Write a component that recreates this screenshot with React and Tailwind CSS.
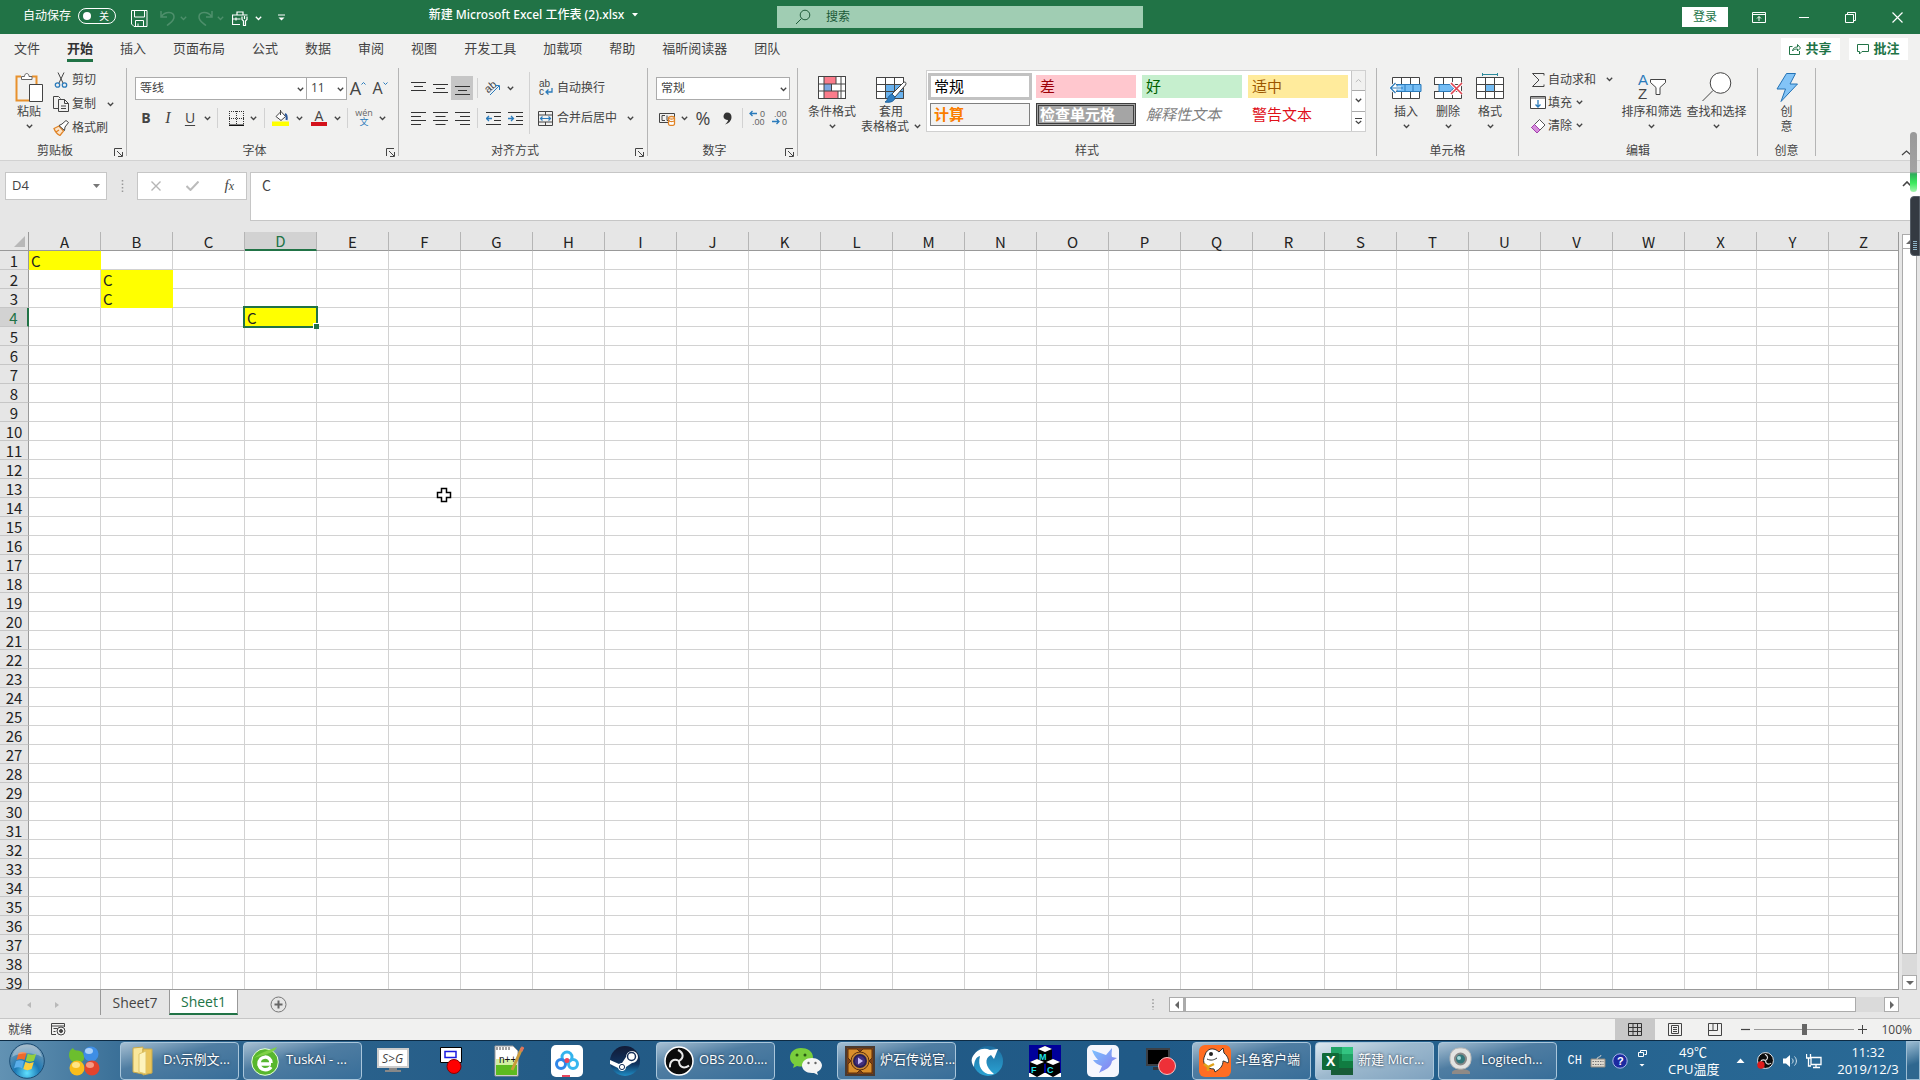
import React, { useState } from 'react';

const COLUMNS = 'ABCDEFGHIJKLMNOPQRSTUVWXYZ'.split('');
const ROWS = Array.from({ length: 39 }, (_, i) => i + 1);
const CELLS = { A1: 'C', B2: 'C', B3: 'C', D4: 'C' };
const TABS = ['文件', '开始', '插入', '页面布局', '公式', '数据', '审阅', '视图', '开发工具', '加载项', '帮助', '福昕阅读器', '团队'];

const Svg = ({ w = 16, h = 16, children, className = '' }) => (
    <svg width={w} height={h} viewBox={`0 0 ${w} ${h}`} fill="none" stroke="#444" className={`shrink-0 ${className}`} aria-hidden="true">
        {children}
    </svg>
);

const Chevron = ({ className = '', color = '#444' }) => (
    <Svg w={7} h={5} className={className}>
        <path d="M0.8 0.8 3.5 3.5 6.2 0.8" stroke={color} strokeWidth="1.3" />
    </Svg>
);

/* ---------- title bar ---------- */

const TitleBar = () => {
    const [autoSave, setAutoSave] = useState(false);
    return (
        <header className="flex h-[34px] shrink-0 items-center bg-[#217346] text-xs text-white">
            <div className="flex min-w-0 flex-1 items-center pb-1">
                <div className="flex w-[290px] shrink-0 items-center pl-[23px] pt-0.5">
                    <label htmlFor="autosave" className="w-[55px] shrink-0">自动保存</label>
                    <span className="relative flex h-4 w-[38px] shrink-0 items-center rounded-full border border-white">
                        <input
                            id="autosave"
                            type="checkbox"
                            role="switch"
                            checked={autoSave}
                            onChange={(e) => setAutoSave(e.target.checked)}
                            className="absolute inset-0 m-0 appearance-none"
                        />
                        <span className="ml-1 size-2 rounded-full bg-white" />
                        <span className="ml-2 text-[10px] leading-none">关</span>
                    </span>
                    <button aria-label="保存" className="ml-[15px] pt-1">
                        <Svg w={17} h={17}>
                            <path d="M0.5 0.5h15.5v16H3l-2.500-2.500zM3.500 0.500v6.500h10v-6.500M4.500 16.500v-6h8v6M7 13.500v3" stroke="#fff" />
                        </Svg>
                    </button>
                    <button aria-label="撤消" className="ml-3 flex items-center gap-1 pt-1 opacity-20">
                        <Svg w={16} h={16}><path d="M1 1v6h6M1.500 6.500C5 1 14 1 14 7c0 4-3 5-7 8.500" stroke="#fff" strokeWidth="1.500" /></Svg>
                        <Chevron color="#fff" />
                    </button>
                    <button aria-label="恢复" className="ml-2.5 flex items-center gap-1 pt-1 opacity-20">
                        <Svg w={16} h={16}><path d="M15 1v6H9M14.500 6.500C11 1 2 1 2 7c0 4 3 5 7 8.500" stroke="#fff" strokeWidth="1.500" /></Svg>
                        <Chevron color="#fff" />
                    </button>
                    <button aria-label="工具" className="ml-2 flex items-center gap-1.5 pt-1">
                        <Svg w={17} h={15}>
                            <path d="M5 4V1h6v3M8 13.500H0.500V4h15M0.500 8h8M4 6.500v3" stroke="#fff" strokeWidth="1.200" />
                            <path d="M10 5.500v3l1.500 1.500v4.500h2V10L15 8.500v-3M12.500 5v3" stroke="#fff" strokeWidth="1.200" />
                        </Svg>
                        <Chevron color="#fff" />
                    </button>
                    <button aria-label="自定义快速访问工具栏" className="ml-[15px] pt-1">
                        <Svg w={9} h={8}><path d="M1 1h7" stroke="#fff" /><path d="M1.500 3.500h6l-3 3z" fill="#fff" stroke="none" /></Svg>
                    </button>
                </div>
                <h1 className="flex min-w-0 flex-1 items-center justify-center gap-2 font-['Noto_Sans','Noto_Sans_CJK_SC',sans-serif] font-medium">
                    新建 Microsoft Excel 工作表 (2).xlsx
                    <Svg w={6} h={4}><path d="M0 0h6L3 3.500z" fill="#fff" stroke="none" /></Svg>
                </h1>
            </div>
            <label className="flex h-[22px] w-[366px] shrink-0 items-center bg-[#a0cdb3] pl-[18px]">
                <Svg w={16} h={16}><circle cx="10" cy="6" r="4.800" stroke="#1f5b39" /><path d="M6.500 9.500 1 15" stroke="#1f5b39" /></Svg>
                <input type="search" aria-label="搜索" placeholder="搜索" className="ml-[15px] min-w-0 flex-1 bg-transparent outline-none placeholder:text-[#1c5a38]" />
            </label>
            <div className="flex min-w-0 flex-1 items-center justify-end">
                <button className="mr-6 h-5 w-[46px] bg-white text-[#217346]">登录</button>
                <button aria-label="功能区显示选项" className="mr-[33px]">
                    <Svg w={14} h={11}><path d="M0.500 0.500h13v10h-13zM0.500 2.500h13M7 9V4.500M5 6.500l2-2 2 2" stroke="#fff" /></Svg>
                </button>
                <button aria-label="最小化" className="mr-9"><Svg w={10} h={11}><path d="M0 5.500h10" stroke="#fff" /></Svg></button>
                <button aria-label="还原" className="mr-9"><Svg w={11} h={11}><path d="M0.500 2.500h8v8h-8zM2.500 2.500v-2h8v8h-2" stroke="#fff" /></Svg></button>
                <button aria-label="关闭" className="mr-[17px]"><Svg w={11} h={11}><path d="m0.500 0.500 10 10M10.500 0.500l-10 10" stroke="#fff" strokeWidth="1.200" /></Svg></button>
            </div>
        </header>
    );
};

const MenuTabs = () => (
    <nav className="flex h-8 shrink-0 items-start bg-[#f1f1f0] pl-3.5 pr-3 text-[13px] text-[#444]">
        <div className="flex flex-1 gap-[27px] pt-1">
            {TABS.map((tab) => (
                <button
                    key={tab}
                    className={tab === '开始' ? 'flex h-6 items-start border-b-[3px] border-[#217346] leading-5 font-bold text-[#333]' : 'flex h-6 items-start border-b-[3px] border-transparent leading-5'}
                >
                    {tab}
                </button>
            ))}
        </div>
        <div className="flex gap-[9px] pt-1 font-bold text-[#217346]">
            <button className="flex h-[22px] w-[59px] items-center justify-center gap-1 bg-white">
                <Svg w={12} h={12}><path d="M3.500 3.500h-3v8h10V8M3.500 8C4 5 6 4 8.500 4V1.500L11.500 5l-3 3V6C6 6 4.500 6.500 3.500 8z" stroke="#217346" /></Svg>
                共享
            </button>
            <button className="flex h-[22px] w-[59px] items-center justify-center gap-1 bg-white">
                <Svg w={12} h={12}><path d="M0.500 1.500h11v7H5L2.500 11V8.500h-2z" stroke="#217346" /></Svg>
                批注
            </button>
        </div>
    </nav>
);

/* ---------- ribbon ---------- */

const Group = ({ label, width, launcher, children }) => (
    <section className={`flex shrink-0 pt-0.5 ${width}`}>
        <div className="flex min-w-0 flex-1 flex-col">
            <div className="h-[75px]">{children}</div>
            <div className="flex h-[18px] items-center">
                <span className="flex-1 text-center leading-[18px]">{label}</span>
                {launcher && (
                    <button aria-label={`${label}设置`} className="mr-[3px] ml-1 w-[9px] pt-0.5">
                        <Svg w={9} h={9}><path d="M0.500 8V0.500H8M3 3l5 5M8.500 4v4.500H4" /></Svg>
                    </button>
                )}
            </div>
        </div>
        <div className="mb-1 w-px bg-[#b5b5b5]" />
    </section>
);

const Tool = ({ label, children, active, className = 'w-[22px]' }) => (
    <button aria-label={label} className={`flex h-6 shrink-0 items-center justify-center ${className} ${active ? 'bg-[#c6c6c6]' : ''}`}>
        {children}
    </button>
);

const Big = ({ icon, lines, width, chevron = true }) => (
    <button className={`flex shrink-0 flex-col items-center ${width}`}>
        <span className="flex h-[34px] items-center justify-center">{icon}</span>
        {lines.map((line, i) => (
            <span key={line} className="flex items-center gap-[5px] leading-[15px] whitespace-nowrap">
                {line}
                {chevron && lines.length > 1 && i === lines.length - 1 && <Chevron />}
            </span>
        ))}
        {chevron && lines.length === 1 && <Chevron className="mt-[5px]" />}
    </button>
);

const DropBox = ({ label, value, className }) => (
    <span className={`relative block h-[23px] ${className}`}>
        <select aria-label={label} defaultValue={value} className="size-full appearance-none border border-[#ababab] bg-white pl-1 text-xs leading-none text-[#444] outline-none">
            <option>{value}</option>
        </select>
        <Chevron className="pointer-events-none absolute top-2.5 right-[3px]" />
    </span>
);

const Divider = () => <span className="mx-1 h-5 w-px shrink-0 bg-[#d2d2d2]" />;

const Lines = ({ d }) => <Svg w={15} h={15}><path d={d} stroke="#333" /></Svg>;

const ClipboardGroup = () => (
    <Group label="剪贴板" width="w-[127px]" launcher>
        <div className="flex">
            <Big
                width="ml-[5px] w-12 pt-0.5"
                lines={['粘贴']}
                icon={(
                    <Svg w={28} h={31}>
                        <path d="M6 4.500H1.500v24H14M17 4.500h4.500V12" stroke="#e8912d" strokeWidth="2" />
                        <path d="M6.500 7.500v-3h3c0-4 4.500-4 4.500 0h3v3z" stroke="#666" fill="#fff" />
                        <path d="M14.500 12.500h13v17h-13z" fill="#fff" />
                    </Svg>
                )}
            />
            <div className="flex flex-col">
                <button className="flex h-6 items-center gap-[3px]">
                    <Svg>
                        <path d="M5 0.500 10 11M11 0.500 6 11" />
                        <circle cx="4.500" cy="13" r="2.200" stroke="#2b7bbb" strokeWidth="1.300" /><circle cx="11.500" cy="13" r="2.200" stroke="#2b7bbb" strokeWidth="1.300" />
                    </Svg>
                    剪切
                </button>
                <button className="flex h-6 items-center gap-[3px]">
                    <Svg>
                        <path d="M5 12.500H0.500V0.500h5l2 2M5.500 3.500h6l4 4v8h-10zM11.500 3.500v4h4M8 10h5M8 12.500h5" />
                    </Svg>
                    <span className="mr-2">复制</span>
                    <Chevron />
                </button>
                <button className="flex h-6 items-center gap-[3px]">
                    <Svg>
                        <path d="M1 8.500 6 6l4.500 5L7 15.500C4 14 2 11.500 1 8.500zM3 12l3-2" stroke="#e08427" strokeWidth="1.300" fill="#fbe3c8" />
                        <path d="m6 5.500 3-1.500L13 0.500l2.500 2L12 7l-0.500 3.500z" fill="#fff" />
                    </Svg>
                    格式刷
                </button>
            </div>
        </div>
    </Group>
);

const FontGroup = () => (
    <Group label="字体" width="w-[272px]" launcher>
        <div className="flex h-10 items-center pl-2">
            <DropBox label="字体" value="等线" className="w-[172px]" />
            <DropBox label="字号" value="11" className="-ml-px w-[41px]" />
            <Tool label="增大字号">
                <span className="text-lg leading-none">A</span><Svg w={5} h={14}><path d="m0.500 3.500 2-2 2 2" stroke="#2b7bbb" /></Svg>
            </Tool>
            <Tool label="减小字号">
                <span className="text-base leading-none">A</span><Svg w={5} h={14}><path d="m0.500 1.500 2 2 2-2" stroke="#2b7bbb" /></Svg>
            </Tool>
        </div>
        <div className="flex h-5 items-center pl-2">
            <Tool label="加粗"><b className="text-sm">B</b></Tool>
            <Tool label="倾斜"><i className="font-['Liberation_Serif',serif] text-base">I</i></Tool>
            <Tool label="下划线"><u className="text-sm underline-offset-2">U</u></Tool>
            <Tool label="下划线样式" className="w-3"><Chevron /></Tool>
            <Divider />
            <Tool label="边框" className="ml-1 w-5">
                <Svg w={15} h={15}><path d="M0.500 0v14M7.500 0v14M14.500 0v14M0 0.500h15M0 7.500h15" strokeDasharray="1 1" stroke="#333" /><path d="M0 14.500h15" stroke="#111" strokeWidth="2" /></Svg>
            </Tool>
            <Tool label="边框样式" className="w-3.5"><Chevron /></Tool>
            <Divider />
            <Tool label="填充颜色" className="w-[22px]">
                <Svg w={17} h={16}>
                    <path d="M0 11.500h17V16H0z" fill="#ff0" stroke="none" />
                    <path d="m4 6.500 5-5 4.500 5-4.500 4zM8.500 0v5" fill="#fff" /><path d="M13 4c2 1 2 3 1.500 6" stroke="#2b579a" strokeWidth="2" />
                </Svg>
            </Tool>
            <Tool label="填充颜色选项" className="w-4"><Chevron /></Tool>
            <Tool label="字体颜色" className="w-6">
                <span className="flex h-4 w-4 items-end justify-center border-b-4 border-[#d4111b] text-sm leading-[13px]">A</span>
            </Tool>
            <Tool label="字体颜色选项" className="w-3"><Chevron /></Tool>
            <Divider />
            <Tool label="拼音" className="w-6 flex-col">
                <span className="text-[9px] leading-[8px] text-[#666]">wén</span>
                <span className="text-[9px] leading-[10px] text-[#2b7bbb]">文</span>
            </Tool>
            <Tool label="拼音选项" className="w-3"><Chevron /></Tool>
        </div>
    </Group>
);

const AlignGroup = () => (
    <Group label="对齐方式" width="w-[249px]" launcher>
        <div className="flex pl-2">
            <div>
                <div className="flex h-10 items-center">
                    <Tool label="顶端对齐"><Lines d="M0 1.500h15M3 5.500h9M0 9.500h15" /></Tool>
                    <Tool label="垂直居中"><Lines d="M0 3.500h15M3 7.500h9M0 11.500h15" /></Tool>
                    <Tool label="底端对齐" active><Lines d="M0 5.500h15M3 9.500h9M0 13.500h15" /></Tool>
                    <Divider />
                    <Tool label="方向" className="w-[22px]">
                        <Svg w={20} h={18}>
                            <text x="2" y="12" fontSize="11" fill="#444" stroke="none" transform="rotate(-40 7 9)" className="font-['Liberation_Sans',sans-serif]">ab</text>
                            <path d="M7 16 16 7M12 6.500h4.500V11" stroke="#2b7bbb" />
                        </Svg>
                    </Tool>
                    <Tool label="方向选项" className="w-3"><Chevron /></Tool>
                </div>
                <div className="flex h-5 items-center">
                    <Tool label="左对齐"><Lines d="M0 1.500h15M0 5.500h10M0 9.500h15M0 13.500h10" /></Tool>
                    <Tool label="居中"><Lines d="M0 1.500h15M2.500 5.500h10M0 9.500h15M2.500 13.500h10" /></Tool>
                    <Tool label="右对齐"><Lines d="M0 1.500h15M5 5.500h10M0 9.500h15M5 13.500h10" /></Tool>
                    <Divider />
                    <Tool label="减少缩进量"><Svg w={15} h={15}><path d="M0 1.500h15M8 5.500h7M8 9.500h7M0 13.500h15" stroke="#333" /><path d="M0.500 7.500H6M3 5 0.500 7.500 3 10" stroke="#2b7bbb" strokeWidth="1.300" /></Svg></Tool>
                    <Tool label="增加缩进量"><Svg w={15} h={15}><path d="M0 1.500h15M8 5.500h7M8 9.500h7M0 13.500h15" stroke="#333" /><path d="M0 7.500h5.500M3 5l2.500 2.500L3 10" stroke="#2b7bbb" strokeWidth="1.300" /></Svg></Tool>
                </div>
            </div>
            <span className="mt-1 mr-2 ml-[3px] h-[62px] w-px bg-[#d2d2d2]" />
            <div>
                <button className="flex h-10 items-center gap-1">
                    <Svg w={15} h={18}>
                        <text x="1" y="8" fontSize="10" fill="#444" stroke="none" className="font-['Liberation_Sans',sans-serif]">ab</text>
                        <text x="1" y="16" fontSize="10" fill="#444" stroke="none" className="font-['Liberation_Sans',sans-serif]">c</text>
                        <path d="M14 9v4H8M10.500 10.500 8 13l2.500 2.500" stroke="#2b7bbb" strokeWidth="1.300" />
                    </Svg>
                    自动换行
                </button>
                <button className="flex h-5 items-center gap-1">
                    <Svg w={15} h={15}>
                        <path d="M0.500 0.500h14v14h-14zM0.500 4h14M0.500 11h14M7.500 0.500V4M7.500 11v3.500" /><path d="M2.500 7.500h10M4.500 5.500l-2 2 2 2M10.500 5.500l2 2-2 2" stroke="#2b7bbb" strokeWidth="1.200" />
                    </Svg>
                    <span className="mr-1.5">合并后居中</span>
                    <Chevron />
                </button>
            </div>
        </div>
    </Group>
);

const NumberGroup = () => (
    <Group label="数字" width="w-[150px]" launcher>
        <div className="flex h-10 items-center pl-2">
            <DropBox label="数字格式" value="常规" className="w-[134px]" />
        </div>
        <div className="flex h-5 items-center pl-2">
            <Tool label="会计数字格式">
                <Svg w={17} h={15}>
                    <path d="M0.500 2.500h15v9h-15zM6 4.500H3v5h3M8 4.500v5h3" /><path d="M9.500 7c0-2 6-2 6 0v6c0 2-6 2-6 0zM9.500 9.500c1 1.500 5 1.500 6 0M9.500 7c1 1.500 5 1.500 6 0" fill="#fff" stroke="#e08427" strokeWidth="1.300" />
                </Svg>
            </Tool>
            <Tool label="会计数字格式选项" className="w-3"><Chevron /></Tool>
            <Tool label="百分比样式" className="w-[26px]"><span className="text-lg leading-none">%</span></Tool>
            <Tool label="千位分隔样式" className="w-[22px]">
                <Svg w={9} h={13}><path d="M4 0.500c3 0 4.500 2 4.500 4.500C8.500 9 5.500 11.500 2 12.500c2-2 3-3 3-4.500C2.500 8 0.500 6.500 0.500 4.500S2 0.500 4 0.500z" fill="#333" stroke="none" /></Svg>
            </Tool>
            <Divider />
            <Tool label="增加小数位数">
                <Svg w={18} h={18}>
                    <text x="11" y="8" fontSize="9" fill="#666" stroke="none" className="font-['Liberation_Sans',sans-serif]">0</text>
                    <text x="3" y="16" fontSize="9" fill="#666" stroke="none" className="font-['Liberation_Sans',sans-serif]">.00</text>
                    <path d="M1 4.500h7M3.500 2 1 4.500 3.500 7" stroke="#2b7bbb" strokeWidth="1.300" />
                </Svg>
            </Tool>
            <Tool label="减少小数位数">
                <Svg w={18} h={18}>
                    <text x="3" y="8" fontSize="9" fill="#666" stroke="none" className="font-['Liberation_Sans',sans-serif]">.00</text>
                    <text x="11" y="16" fontSize="9" fill="#666" stroke="none" className="font-['Liberation_Sans',sans-serif]">0</text>
                    <path d="M1 12.500h7M5.500 10 8 12.500 5.500 15" stroke="#2b7bbb" strokeWidth="1.300" />
                </Svg>
            </Tool>
        </div>
    </Group>
);

const STYLES = [
    ['常规', 'bg-white px-1 text-black outline-3 outline-[#c2c2c2] -outline-offset-1'],
    ['差', 'bg-[#ffc7ce] px-1 text-[#9c0006]'],
    ['好', 'bg-[#c6efce] px-1 text-[#006100]'],
    ['适中', 'bg-[#ffeb9c] px-1 text-[#9c5700]'],
    ['计算', 'border border-[#7f7f7f] bg-[#f2f2f2] px-[3px] font-bold text-[#fa7d00]'],
    ['检查单元格', 'border-3 border-double border-[#3f3f3f] bg-[#a5a5a5] px-px font-bold text-white'],
    ['解释性文本', 'px-1 text-[#7f7f7f] italic'],
    ['警告文本', 'px-1 text-[#e0101a]'],
];

const StylesGroup = () => (
    <Group label="样式" width="w-[579px]">
        <div className="flex">
            <Big
                width="ml-[5px] w-[58px] pt-0.5"
                lines={['条件格式']}
                icon={(
                    <Svg w={28} h={23}>
                        <path d="M0.500 0.500h27v22h-27z" fill="#fff" />
                        <path d="M6 1h12v7H6zM6 15h14v7H6z" fill="#fb7c8b" stroke="none" /><path d="M6 8h7v7H6z" fill="#7da7e0" stroke="none" />
                        <path d="M0.500 0.500h27v22h-27zM0.500 8h27M0.500 15h27M6 0.500v22M13.500 8v7M18 0.500V8M20 15v7M23 0.500v22" />
                    </Svg>
                )}
            />
            <Big
                width="w-[60px] pt-0.5"
                lines={['套用', '表格格式']}
                icon={(
                    <Svg w={32} h={28} className="mt-1">
                        <path d="M1.500 2.500h27v21h-27z" fill="#fff" /><path d="M10 9h18v14H10z" fill="#69b2ee" stroke="none" />
                        <path d="M1.500 2.500h27v21h-27zM1.500 9.500h27M1.500 16.500h27M10.500 2.500v21M19.500 2.500v21" />
                        <path d="M29 7c2 0 2.500 1 1.500 3L20 22l-3-3z" fill="#fff" />
                        <path d="M17 19l3 3c0 4-4 6-10 5 3-1 2-6 7-8z" fill="#2f7dc0" stroke="#1f5f99" />
                    </Svg>
                )}
            />
            <div className="mt-0.5 ml-[5px] flex h-[62px] border border-[#d0d0d0] bg-white">
                <div className="grid grid-cols-4 content-start gap-x-1.5 gap-y-[5px] px-[3px] py-1">
                    {STYLES.map(([name, style]) => (
                        <button key={name} className={`flex h-[23px] w-[100px] items-center text-[15px] leading-none whitespace-nowrap ${style}`}>{name}</button>
                    ))}
                </div>
                <div className="flex w-3.5 flex-col border-l border-[#c6c6c6]">
                    <button aria-label="上一行" className="flex flex-1 items-center justify-center bg-[#f1f1f0]"><Svg w={7} h={5}><path d="M0.800 4 3.500 1.500 6.200 4" stroke="#bbb" /></Svg></button>
                    <button aria-label="下一行" className="flex flex-1 items-center justify-center border-y border-[#ababab]"><Chevron /></button>
                    <button aria-label="其他" className="flex flex-1 items-center justify-center"><Svg w={7} h={7}><path d="M0 0.500h7M0.800 3 3.500 5.500 6.200 3" strokeWidth="1.200" /></Svg></button>
                </div>
            </div>
        </div>
    </Group>
);

const CellGrid = () => <path d="M3.500 4.500h27v21h-27zM3.500 11.500h27M3.500 18.500h27M12.500 4.500v21M21.500 4.500v21" fill="#fff" />;

const CellsGroup = () => (
    <Group label="单元格" width="w-[142px]">
        <div className="flex pl-2 pt-0.5">
            <Big width="w-[42px]" lines={['插入']} icon={(
                <Svg w={34} h={28}>
                    <CellGrid />
                    <path d="M8 11.500h24v7H8z" fill="#74bdf5" stroke="#2b7bbb" /><path d="M16 11.500v7M24 11.500v7" stroke="#2b7bbb" />
                    <path d="M1.500 15H12M6.500 10l-5 5 5 5" stroke="#fff" strokeWidth="3" /><path d="M1.500 15H14M6.500 10l-5 5 5 5" stroke="#2b7bbb" strokeWidth="1.200" />
                </Svg>
            )} />
            <Big width="w-[42px]" lines={['删除']} icon={(
                <Svg w={34} h={28}>
                    <CellGrid />
                    <path d="M2 12h6v6H2z" fill="#f1f1f0" stroke="none" />
                    <path d="M8 11.500h11l4 3.500-4 3.500H8z" fill="#74bdf5" stroke="#2b7bbb" /><path d="m20 10 11 11M31 10 20 21" stroke="#fff" strokeWidth="3.500" /><path d="m20 10 11 11M31 10 20 21" stroke="#e04350" strokeWidth="1.600" />
                </Svg>
            )} />
            <Big width="w-[42px]" lines={['格式']} icon={(
                <Svg w={34} h={28}>
                    <CellGrid />
                    <path d="M12.500 11.500h9v7h-9z" fill="#74bdf5" /><path d="M9.500 1.500h15M9.500 0v3M24.500 0v3" stroke="#2b8a9b" />
                </Svg>
            )} />
        </div>
    </Group>
);

const EditGroup = () => (
    <Group label="编辑" width="w-[239px]">
        <div className="flex pl-[11px]">
            <div className="flex w-[89px] flex-col">
                <button className="flex h-[23px] items-center gap-0.5 whitespace-nowrap">
                    <Svg><path d="M14 3.500V1.500H2.500L9 8l-6.500 6.500H14v-2" /></Svg>
                    <span className="mr-2">自动求和</span><Chevron />
                </button>
                <button className="flex h-[23px] items-center gap-0.5">
                    <Svg><path d="M0.500 1.500h15v12h-15z" fill="#fff" /><path d="M0.500 3h15" /><path d="M8 5v7M5.500 9.500 8 12l2.500-2.500" stroke="#2b7bbb" strokeWidth="1.300" /></Svg>
                    填充<Chevron className="ml-0.5" />
                </button>
                <button className="flex h-[23px] items-center gap-0.5">
                    <Svg><path d="M9.500 1.500 15 7l-8 8-5.500-5.500z" stroke="#555" fill="#fff" /><path d="M4.500 6.500 10 12l-3 3-5.500-5.500z" fill="#d68fdc" stroke="#a43fae" /></Svg>
                    清除<Chevron className="ml-0.5" />
                </button>
            </div>
            <Big width="w-[65px] pt-0.5" lines={['排序和筛选']} icon={(
                <Svg w={30} h={32}>
                    <text x="1" y="14" fontSize="15" fill="#2b7bbb" stroke="none" className="font-['Liberation_Sans',sans-serif]">A</text>
                    <text x="1" y="28" fontSize="15" fill="#444" stroke="none" className="font-['Liberation_Sans',sans-serif]">Z</text>
                    <path d="M13.500 8.500h15v3l-5.500 5v7h-4v-7l-5.500-5z" fill="#fff" />
                </Svg>
            )} />
            <Big width="w-[65px] pt-0.5" lines={['查找和选择']} icon={(
                <Svg w={30} h={30}><circle cx="18.500" cy="11" r="10.300" fill="#fff" /><path d="M11 18.500.5 29" /></Svg>
            )} />
        </div>
    </Group>
);

const Ribbon = () => (
    <div className="flex h-[95px] shrink-0 overflow-hidden border-b border-[#d2d2d2] bg-[#f1f1f0] text-xs text-[#444]">
        <ClipboardGroup />
        <FontGroup />
        <AlignGroup />
        <NumberGroup />
        <StylesGroup />
        <CellsGroup />
        <EditGroup />
        <Group label="创意" width="w-[58px]">
            <Big width="w-full pt-0.5" chevron={false} lines={['创', '意']} icon={(
                <Svg w={22} h={29}><path d="M10.500 0.500h9L14 11h7.500L5 28.500 9.500 16H1z" fill="#83c4f7" stroke="#2472b4" /></Svg>
            )} />
        </Group>
        <div className="flex flex-1 items-end justify-end pr-2 pb-1">
            <button aria-label="折叠功能区"><Svg w={11} h={6}><path d="m1 5 4.500-4L10 5" strokeWidth="1.200" /></Svg></button>
        </div>
    </div>
);

/* ---------- formula bar ---------- */

const FormulaBar = () => (
    <div className="flex h-[71px] shrink-0 items-start bg-[#e6e6e6] pt-[11px] pl-[5px] text-[13px] text-[#444]">
        <div className="flex h-7 w-[102px] shrink-0 items-center border border-[#c6c6c6] bg-white">
            <input aria-label="名称框" defaultValue="D4" className="w-20 flex-1 pl-1.5 outline-none" />
            <button aria-label="名称列表" className="pr-1.5"><Svg w={7} h={4}><path d="M0 0h7L3.500 4z" fill="#777" stroke="none" /></Svg></button>
        </div>
        <Svg w={30} h={28}><path d="M15.500 8v13" stroke="#999" strokeWidth="1.500" strokeDasharray="1.500 2" /></Svg>
        <div className="flex h-7 w-[110px] shrink-0 items-center justify-between border border-[#c6c6c6] bg-white pr-3 pl-[13px]">
            <button aria-label="取消"><Svg w={10} h={10}><path d="m0.500 0.500 9 9M9.500 0.500l-9 9" stroke="#b5b5b5" strokeWidth="1.400" /></Svg></button>
            <button aria-label="输入"><Svg w={13} h={10}><path d="m0.500 5 4 4 8-8.500" stroke="#bbb" strokeWidth="2" /></Svg></button>
            <button aria-label="插入函数" className="font-['Liberation_Serif',serif] text-[15px] leading-none italic">f<span className="text-xs">x</span></button>
        </div>
        <div className="ml-[3px] flex h-[49px] min-w-0 flex-1 border border-r-0 border-[#c6c6c6] bg-white">
            <textarea aria-label="编辑栏" defaultValue="C" className="flex-1 resize-none pt-0.5 pl-[11px] font-['Noto_Sans_CJK_SC',sans-serif] text-sm outline-none" />
            <button aria-label="折叠编辑栏" className="self-start pt-2 pr-2"><Svg w={10} h={6}><path d="m1 5 4-4 4 4" strokeWidth="1.600" /></Svg></button>
        </div>
    </div>
);

/* ---------- sheet ---------- */

const Arrow = ({ d, color = '#666' }) => <Svg w={8} h={8}><path d={d} fill={color} stroke="none" /></Svg>;

const Sheet = () => (
    <main className="flex min-h-0 flex-1 bg-[#e6e6e6]">
        <div className="min-w-0 flex-1 overflow-hidden border-r border-b border-[#999] bg-white">
            <table className="w-full table-fixed border-separate border-spacing-0 font-['Noto_Sans_CJK_SC',sans-serif] text-[15px] leading-4 text-[#222]">
                <colgroup>
                    <col className="w-[29px]" />
                    {COLUMNS.map((c) => <col key={c} className={c === 'Z' ? '' : 'w-[72px]'} />)}
                </colgroup>
                <thead>
                    <tr className="bg-[#e6e6e6]">
                        <th aria-label="全选" className="h-[19px] border-r border-b border-[#999] p-0">
                            <Svg w={11} h={11} className="mr-[3px] ml-auto block"><path d="M11 0v11H0z" fill="#b8b8b8" stroke="none" /></Svg>
                        </th>
                        {COLUMNS.map((c) => (
                            <th
                                key={c}
                                scope="col"
                                className={c === 'D'
                                    ? 'h-[19px] border-r border-b-2 border-r-[#b5b5b5] border-b-[#217346] bg-[#d2d2d2] p-0 pt-px font-normal text-[#217346]'
                                    : 'h-[19px] border-r border-b border-r-[#b5b5b5] border-b-[#999] p-0 pt-0.5 font-normal last:border-r-0'}
                            >
                                {c}
                            </th>
                        ))}
                    </tr>
                </thead>
                <tbody>
                    {ROWS.map((r) => (
                        <tr key={r}>
                            <th
                                scope="row"
                                className={r === 4
                                    ? 'h-[19px] border-r-2 border-b border-r-[#217346] border-b-[#c6c6c6] bg-[#d2d2d2] p-0 pt-0.5 font-normal text-[#217346]'
                                    : 'h-[19px] border-r border-b border-r-[#999] border-b-[#c6c6c6] bg-[#e6e6e6] p-0 pt-0.5 font-normal'}
                            >
                                {r}
                            </th>
                            {COLUMNS.map((c) => {
                                const value = CELLS[c + r];
                                if (!value) return <td key={c} className="border-r border-b border-[#d2d2d2] p-0 last:border-r-0" />;
                                return (
                                    <td key={c} className="relative border-r border-b border-[#ff0] bg-[#ff0] p-0 pt-0.5 pl-0.5">
                                        {value}
                                        {c + r === 'D4' && (
                                            <span className="absolute -top-0.5 -right-0.5 -bottom-0.5 -left-0.5 border-2 border-[#217346]">
                                                <span className="absolute -right-[3px] -bottom-[3px] size-[6px] border-t border-l border-white bg-[#217346]" />
                                            </span>
                                        )}
                                    </td>
                                );
                            })}
                        </tr>
                    ))}
                </tbody>
            </table>
        </div>
        <div className="flex w-[21px] shrink-0 flex-col items-start pt-0.5 pl-[3px]">
            <button aria-label="向上滚动" className="flex h-[15px] w-[15px] items-center justify-center border border-[#ababab] bg-white"><Arrow d="M0 6h8L4 2z" /></button>
            <div className="w-[15px] flex-1 border border-t-0 border-[#ababab] bg-white" />
            <div className="h-[21px] w-[15px] bg-[#dadada]" />
            <button aria-label="向下滚动" className="flex h-[15px] w-[15px] items-center justify-center border border-[#ababab] bg-white"><Arrow d="M0 2h8L4 6z" /></button>
        </div>
    </main>
);

const SheetTabs = () => (
    <div className="flex h-[29px] shrink-0 items-start border-b border-[#c6c6c6] bg-[#e6e6e6] pr-[21px] text-sm text-[#444]">
        <div className="flex h-[25px] w-[101px] items-center gap-5 border-r border-[#999] pt-1 pl-[25px]">
            <button aria-label="上一个工作表"><Arrow d="M6 1v6L2 4z" color="#b9b9b9" /></button>
            <button aria-label="下一个工作表"><Arrow d="M2 1v6l4-3z" color="#b9b9b9" /></button>
        </div>
        <button className="h-[25px] w-[68px]">Sheet7</button>
        <button className="h-[25px] w-[69px] border-x border-b-2 border-x-[#999] border-b-[#217346] bg-white text-[#217346]">Sheet1</button>
        <button aria-label="新工作表" className="mt-1.5 ml-8">
            <Svg w={17} h={17}><circle cx="8.500" cy="8.500" r="7.500" stroke="#777" /><path d="M8.500 4.500v8M4.500 8.500h8" stroke="#666" strokeWidth="2" /></Svg>
        </button>
        <div className="ml-auto flex w-2/5 items-center pt-[7px] pl-3">
            <Svg w={4} h={13} className="mr-3.5"><path d="M2 1v11" stroke="#999" strokeWidth="1.500" strokeDasharray="1.500 2" /></Svg>
            <button aria-label="向左滚动" className="flex h-[15px] w-[15px] items-center justify-center border border-[#ababab] bg-white"><Arrow d="M6 0v8L2 4z" /></button>
            <div className="h-[15px] flex-1 border border-l-2 border-[#ababab] bg-white" />
            <div className="h-[15px] w-7 bg-[#dadada]" />
            <button aria-label="向右滚动" className="flex h-[15px] w-[15px] items-center justify-center border border-[#ababab] bg-white"><Arrow d="M2 0v8l4-4z" /></button>
        </div>
    </div>
);

const StatusBar = () => (
    <footer className="flex h-[21px] shrink-0 items-center bg-[#f1f1f0] pr-2 pl-2 text-xs text-[#444]">
        <span>就绪</span>
        <button aria-label="录制宏" className="ml-[19px]">
            <Svg w={15} h={13}><path d="M5 11.500H0.500V0.500h13V4M0.500 3h13M2.500 5.500h4M2.500 8.500h2" /><circle cx="10" cy="8" r="4" /><circle cx="10" cy="8" r="1.500" fill="#444" /></Svg>
        </button>
        <div className="ml-auto flex items-center">
            <button aria-label="普通" className="flex h-[21px] w-10 items-center justify-center bg-[#c8c8c8]"><Svg w={14} h={13}><path d="M0.500 0.500h13v12h-13zM0.500 4.500h13M0.500 8.500h13M5 0.500v12M9.500 0.500v12" stroke="#333" /></Svg></button>
            <button aria-label="页面布局" className="flex w-10 items-center justify-center"><Svg w={14} h={13}><path d="M0.500 0.500h13v12h-13zM3.500 2.500h7v8h-7zM5 4.500h4M5 6.500h4M5 8.500h4" /></Svg></button>
            <button aria-label="分页预览" className="flex w-10 items-center justify-center"><Svg w={14} h={13}><path d="M0.500 0.500h13v12h-13zM5 0.500v7M9.500 0.500v7M0.500 7.500h9" /></Svg></button>
            <button aria-label="缩小" className="ml-1.5"><Svg w={9} h={9}><path d="M0 4.500h9" strokeWidth="1.200" /></Svg></button>
            <input
                type="range"
                aria-label="缩放"
                className="mx-1 h-3 w-[100px] appearance-none bg-[linear-gradient(#999,#999)] bg-[length:100%_1px] bg-center bg-no-repeat [&::-webkit-slider-thumb]:h-[11px] [&::-webkit-slider-thumb]:w-[5px] [&::-webkit-slider-thumb]:appearance-none [&::-webkit-slider-thumb]:bg-[#666]"
            />
            <button aria-label="放大"><Svg w={9} h={9}><path d="M0 4.500h9M4.500 0v9" /></Svg></button>
            <button className="ml-[9px] w-9 text-right">100%</button>
        </div>
    </footer>
);

/* ---------- taskbar ---------- */

const StartIcon = () => (
    <Svg w={36} h={36}>
        <defs>
            <radialGradient id="orb" cx="0.5" cy="0.85" r="0.8"><stop offset="0" stopColor="#5fe0ff" /><stop offset="0.45" stopColor="#1c78b4" /><stop offset="1" stopColor="#7c9db5" /></radialGradient>
        </defs>
        <circle cx="18" cy="18" r="17.300" fill="url(#orb)" stroke="#1b4c74" />
        <path d="M9.500 10c3-1.500 5.500-1.500 8 0L15.500 17c-2.500-1.500-5-1.500-8 0z" fill="#ee6a2c" stroke="none" />
        <path d="M18.700 10.700c3 1.500 5.500 1.500 8.500 0L25 17.700c-3 1.500-5.500 1.500-8.300 0z" fill="#94cf3e" stroke="none" />
        <path d="M7 18.300c3-1.500 5.500-1.500 8 0l-2 7c-2.500-1.500-5-1.500-8 0z" fill="#5aaeea" stroke="none" />
        <path d="M16.300 19c3 1.500 5.500 1.500 8.500 0l-2.200 7c-3 1.500-5.500 1.500-8.300 0z" fill="#fccf3d" stroke="none" />
        <path d="M3 14C6 4 12 1.500 18 1.500S30 4 33 14C24 9 12 9 3 14z" fill="#fff" fillOpacity="0.300" stroke="none" />
    </Svg>
);

const CloverIcon = () => (
    <Svg w={32} h={32}>
        <g stroke="none">
            <path d="M5 3c2 4 5 1 9 4 3 3 3 9-1 10-4 1-9 1-11-3S1 5 5 3z" fill="#6cbe2e" />
            <circle cx="23" cy="9" r="7.500" fill="#3e8ee6" /><circle cx="9" cy="23" r="7.500" fill="#f8bd1c" /><circle cx="24" cy="23" r="7.500" fill="#e3442c" />
            <ellipse cx="21" cy="6" rx="4" ry="3" fill="#a9d1fa" /><ellipse cx="8" cy="20" rx="4" ry="3" fill="#ffe585" /><ellipse cx="22" cy="20" rx="4" ry="3" fill="#f79a83" />
        </g>
    </Svg>
);

const FolderIcon = () => (
    <Svg w={26} h={30}>
        <path d="M3 2 13 1v27L3 26z" fill="#f9e69b" stroke="#c9a94a" />
        <path d="M13 3h9v24l-9 2z" fill="#eac55b" stroke="#c9a94a" /><path d="M9 8 16 5v23l-7-2z" fill="#fdf3bd" stroke="#dfc469" />
    </Svg>
);

const BrowserIcon = () => (
    <Svg w={30} h={30}>
        <circle cx="14" cy="16" r="13.300" fill="#58b72e" stroke="#e9ffe0" />
        <path d="M20 18H8c0-9 12-9 12-1M8 18c1 7 9 7 12 3" stroke="#fff" strokeWidth="3.500" />
        <path d="M3 12C10 6 18 4 26 1c-2 5-9 7-17 9z" fill="#7fd146" stroke="none" />
    </Svg>
);

const ScreenIcon = () => (
    <Svg w={32} h={26}>
        <path d="M1 1h30v18H1z" fill="#fff" stroke="#ccc" strokeWidth="2" />
        <path d="M12 20h8v2h4v2H8v-2h4z" fill="#888" stroke="none" />
        <text x="5" y="15" fontSize="12" fontStyle="italic" fill="#444" stroke="none">S&gt;G</text>
    </Svg>
);

const CaptureIcon = () => (
    <Svg w={22} h={27}>
        <path d="M0.500 0.500h21v15h-21z" fill="#fff" stroke="#000" /><path d="M5 4.500h11v6H5z" stroke="#1a1ae0" strokeWidth="1.500" />
        <circle cx="14" cy="19.500" r="7" fill="#f00" stroke="#800" />
    </Svg>
);

const NotepadIcon = () => (
    <Svg w={30} h={32}>
        <path d="M1 1h18l5 5v25H1z" fill="#fff" stroke="#9a9a9a" /><path d="M2 20h21v10H2z" fill="#5dbb20" stroke="none" /><path d="M2 14h21v6H2z" fill="#d3efa2" stroke="none" />
        <path d="M3 2v3M6 2v3M9 2v3M12 2v3M15 2v3" stroke="#444" />
        <text x="5" y="18" fontSize="10" fill="#111" stroke="none" className="font-['Liberation_Sans',sans-serif]">n++</text>
        <path d="M28 3 18 25" stroke="#c99b3b" strokeWidth="3" /><path d="m29 2-2 4" stroke="#e0745c" strokeWidth="3" />
    </Svg>
);

const NetdiskIcon = () => (
    <Svg w={32} h={32}>
        <rect width="32" height="32" rx="5" fill="#fff" stroke="none" />
        <circle cx="16" cy="12" r="5" stroke="#33b3ec" strokeWidth="3" />
        <circle cx="10" cy="19" r="4.500" stroke="#2f86e8" strokeWidth="3" /><circle cx="22" cy="19" r="4.500" stroke="#36b6ef" strokeWidth="3" />
        <circle cx="16" cy="15.500" r="2.500" fill="#f0455a" stroke="none" /><path d="M11 31h8" stroke="#e8485e" strokeWidth="2" />
    </Svg>
);

const SteamIcon = () => (
    <Svg w={32} h={32}>
        <defs><linearGradient id="steam" x2="0" y2="1"><stop stopColor="#121a35" /><stop offset="0.600" stopColor="#10335f" /><stop offset="1" stopColor="#1f8ec6" /></linearGradient></defs>
        <circle cx="16" cy="16" r="15" fill="url(#steam)" stroke="none" />
        <path d="M1 15l9 4c1-1 2-1 3-1l4-6a6 6 0 1 1 6 6l-6 4c0 5-7 5-8 1L1 19z" fill="#fff" stroke="none" />
        <circle cx="22.500" cy="11.500" r="4" fill="#fff" stroke="#17305a" strokeWidth="1.500" /><circle cx="13" cy="22" r="2.600" stroke="#17305a" />
    </Svg>
);

const ObsIcon = ({ size = 30, dot }) => (
    <svg width={size} height={size} viewBox="0 0 30 30" fill="none" aria-hidden="true" className="shrink-0">
        <circle cx="15" cy="15" r="14" fill="#0c0c0c" stroke="#fff" strokeWidth="1.500" />
        {[0, 120, 240].map((a) => (
            <path key={a} transform={`rotate(${a} 15 15)`} d="M15 15C20 12 20 7 14 4" stroke="#e8e8e8" strokeWidth="2" />
        ))}
        {dot && <circle cx="7" cy="23" r="6.500" fill="#e01b1b" />}
    </svg>
);

const WechatIcon = () => (
    <Svg w={34} h={28}>
        <g stroke="none">
            <path d="M12 1C5 1 1 5.500 1 10.500c0 3 1.500 5.500 4 7L4 21l4-2c8 2 16-2 16-8.500S18 1 12 1z" fill="#79ce3c" />
            <circle cx="8" cy="8" r="1.500" fill="#2a5b12" /><circle cx="16" cy="8" r="1.500" fill="#2a5b12" />
            <path d="M23 11c-6 0-10 3.500-10 7.500S17 26 23 26l2 0 4 2-1-3c3-1.500 5-4 5-6.500 0-4-4.500-7.500-10-7.500z" fill="#f4f4f4" />
            <circle cx="19.500" cy="16" r="1.200" fill="#666" /><circle cx="26.500" cy="16" r="1.200" fill="#666" />
        </g>
    </Svg>
);

const HearthIcon = () => (
    <Svg w={30} h={30}>
        <path d="M1 1h28v28H1z" fill="#7a4017" stroke="#4a3a30" strokeWidth="2" />
        <path d="M3 3h9l3 3 3-3h9v9l-3 3 3 3v9h-9l-3-3-3 3H3v-9l3-3-3-3z" fill="#d98f2c" stroke="#5c2f0d" />
        <circle cx="15" cy="15" r="9" fill="#c98932" stroke="#5c2f0d" /><circle cx="15" cy="15" r="6" fill="#41307f" stroke="#2b2055" strokeWidth="2" />
        <path d="m13 11.500 5 3.500-5 3.500z" fill="#c9bdf5" stroke="none" />
    </Svg>
);

const ArrowOrbIcon = () => (
    <Svg w={34} h={32}>
        <defs><linearGradient id="aorb" x2="0" y2="1"><stop stopColor="#1d6c9e" /><stop offset="1" stopColor="#2ba3d4" /></linearGradient></defs>
        <circle cx="18" cy="16" r="15" fill="url(#aorb)" stroke="none" />
        <path d="M2 13C6 4 14 2 20 5l8-1-4 10-3-4c-7 3-6 12 3 19C13 31 7 22 10 11 6 12 4 16 4 22 2 19 1 16 2 13z" fill="#fff" stroke="none" />
    </Svg>
);

const MfcIcon = () => (
    <Svg w={32} h={32}>
        <path d="M0 0h32v32H0z" fill="#00009a" stroke="none" />
        <path d="M0 28h32v4H0z" fill="#fff" stroke="none" />
        {[[16, 1, 'M'], [8, 14, 'F'], [24, 14, 'C']].map(([x, y, t]) => (
            <g key={t} transform={`translate(${x} ${y})`} stroke="none">
                <path d="M0 0l7 3v11l-7 4-7-4V3z" fill="#000" /><path d="M0 0l7 3-7 3-7-3z" fill="#fff" />
                <text x="-6" y="14" fontSize="9" fontWeight="bold" fill="#1fe0e8" className="font-['Liberation_Sans',sans-serif]">{t}</text>
            </g>
        ))}
    </Svg>
);

const BirdIcon = () => (
    <Svg w={32} h={32}>
        <defs><linearGradient id="bird" x2="1" y2="1"><stop stopColor="#7bc4ff" /><stop offset="1" stopColor="#8878ee" /></linearGradient></defs>
        <rect width="32" height="32" rx="5" fill="#f5f6fd" stroke="none" />
        <path d="M5 5l14 5 6-7c0 4-1 6 0 9l5 1-5 3c-1 7-6 8-13 12l3-7c-4-1-7-3-9-6l5 0C8 12 6 8 5 5z" fill="url(#bird)" stroke="none" />
    </Svg>
);

const RecordIcon = () => (
    <Svg w={32} h={28}>
        <path d="M2 2h22v16H2z" fill="#000" stroke="#3c4046" strokeWidth="2" /><path d="M8 20h10v3H8z" fill="#30363c" stroke="none" />
        <circle cx="22" cy="19" r="8.500" fill="#ee3038" stroke="#f7c4c4" />
    </Svg>
);

const DouyuIcon = () => (
    <Svg w={32} h={32}>
        <rect width="32" height="32" rx="6" fill="#ff6d22" stroke="none" />
        <path d="M6 10C8 3 15 2 20 7l4-4 1 5c5 4 5 9 4 10-2-1-4-2-5-2 0 5-3 8-8 11l-1-3C7 24 2 18 6 10z" fill="#fff" stroke="#333" />
        <circle cx="12" cy="9" r="2" fill="#222" stroke="none" /><path d="M8 14c4 2 7 1 10-1" stroke="#333" /><path d="M5 19l4 3 6-3M9 22v4" stroke="#e0a21a" strokeWidth="2.500" />
    </Svg>
);

const ExcelIcon = () => (
    <Svg w={32} h={30}>
        <g stroke="none">
            <path d="M9 1h22v28H9z" fill="#21a366" /><path d="M20 1h11v7H20z" fill="#33c481" /><path d="M9 8h11v14H9z" fill="#107c41" /><path d="M9 22h22v7H9z" fill="#185c37" /><path d="M20 15h11v7H20z" fill="#107c41" />
            <rect y="7" width="17" height="17" rx="1" fill="#0f6a38" />
            <text x="4" y="20" fontSize="14" fontWeight="bold" fill="#fff">X</text>
        </g>
    </Svg>
);

const WebcamIcon = () => (
    <Svg w={24} h={28}>
        <path d="M3 25c2-4 16-4 18 0v2H3z" fill="#8f8a86" stroke="none" />
        <rect x="1" y="1" width="21" height="21" rx="9" fill="#e3e3e1" stroke="#b9b9b7" />
        <circle cx="11.500" cy="12" r="5.500" fill="#32777b" stroke="#888" strokeWidth="2" /><circle cx="10" cy="11" r="2" fill="#a7dadb" stroke="none" />
    </Svg>
);

const TASKS = [
    { label: 'D:\\示例文...', icon: <FolderIcon /> },
    { label: 'TuskAi - ...', icon: <BrowserIcon /> },
    { name: '屏幕录制', icon: <ScreenIcon /> },
    { name: '截图', icon: <CaptureIcon /> },
    { name: 'Notepad++', icon: <NotepadIcon /> },
    { name: '网盘', icon: <NetdiskIcon /> },
    { name: 'Steam', icon: <SteamIcon /> },
    { label: 'OBS 20.0....', icon: <ObsIcon /> },
    { name: '微信', icon: <WechatIcon /> },
    { label: '炉石传说官...', icon: <HearthIcon /> },
    { name: '加速器', icon: <ArrowOrbIcon /> },
    { name: 'MFC', icon: <MfcIcon /> },
    { name: '迅雷', icon: <BirdIcon /> },
    { name: '录像', icon: <RecordIcon /> },
    { label: '斗鱼客户端', icon: <DouyuIcon /> },
    { label: '新建 Micr...', icon: <ExcelIcon />, active: true },
    { label: 'Logitech...', icon: <WebcamIcon /> },
];

const Taskbar = () => (
    <div className="flex h-10 shrink-0 items-center border-t border-[#0d2b44] bg-[linear-gradient(90deg,#6292b3,#2f6690_8%,#235b86_30%,#205a87_60%,#2a6a96)] text-[13px] text-white">
        <button aria-label="开始" className="flex w-[54px] shrink-0 justify-center"><StartIcon /></button>
        <button aria-label="四叶草" className="flex w-16 shrink-0 items-center pl-3.5"><CloverIcon /></button>
        {TASKS.map(({ label, name, icon, active }) => (label ? (
            <button
                key={label}
                className={`mx-0.5 flex h-[38px] w-[119px] shrink-0 items-center gap-1 rounded-sm border border-[#a9c6db] pl-1.5 ${active
                    ? 'bg-[linear-gradient(160deg,#dbe7ef,#9db9ce_45%,#7fa2bf)]'
                    : 'bg-[linear-gradient(165deg,#a6bfd2,#4f7da2_40%,#386e99)]'}`}
            >
                <span className="flex w-8 shrink-0 justify-center">{icon}</span>
                <span className="pb-0.5 whitespace-nowrap [text-shadow:0_0_3px_#123]">{label}</span>
            </button>
        ) : (
            <button key={name} aria-label={name} className="flex w-[58px] shrink-0 justify-center">{icon}</button>
        )))}
        <div className="ml-auto flex h-full items-center">
            <span className="font-['Liberation_Mono','Noto_Sans_CJK_SC',monospace] text-xs">CH</span>
            <Svg w={16} h={14} className="ml-2"><path d="M1 5h14v8H1z" fill="#ded9cf" stroke="#8b867c" /><path d="M2.500 7.500h11M2.500 10.500h11" strokeDasharray="1.500 1" stroke="#777" /><path d="M7 5c0-3 4-1 4-4" stroke="#ccc" /></Svg>
            <Svg w={16} h={16} className="ml-1.5"><circle cx="8" cy="8" r="7.200" fill="#1c2aa0" stroke="#a8b4e8" /><text x="5" y="12" fontSize="11" fontWeight="bold" fill="#fff" stroke="none" className="font-['Liberation_Sans',sans-serif]">?</text></Svg>
            <Svg w={9} h={18} className="mb-1 ml-2.5"><path d="M2.500 2.500v-2h6v4h-2M0.500 2.500h5v4h-5z" stroke="#fff" /><path d="M1.500 14h5L4 16.500z" fill="#fff" stroke="none" /></Svg>
            <div className="ml-[21px] w-[50px] text-center leading-[17px] whitespace-nowrap">49℃<br />CPU温度</div>
            <button aria-label="显示隐藏的图标" className="ml-[18px]"><Svg w={9} h={5}><path d="M0.500 5h8L4.500 0.500z" fill="#fff" stroke="none" /></Svg></button>
            <span className="ml-3"><ObsIcon size={17} dot /></span>
            <Svg w={16} h={16} className="ml-2"><path d="M1 5.500h3L8 2v12L4 10.500H1z" fill="#fff" stroke="none" /><path d="M10 5.500c1.500 1.500 1.500 3.500 0 5M12.500 3.500c2.500 2.500 2.500 6.500 0 9" stroke="#d5e5ef" /></Svg>
            <Svg w={16} h={16} className="ml-2"><path d="M5 4.500h10v7H5zM10 11.500V14M7 14.500h7M2.500 5v8H5M0.500 1v4h4V1" stroke="#fff" strokeWidth="1.300" /></Svg>
            <time className="ml-3.5 w-16 text-center leading-[17px]">11:32<br />2019/12/3</time>
            <button aria-label="显示桌面" className="ml-1.5 h-full w-3.5 border border-[#9dbdd3] bg-[linear-gradient(160deg,#9dbdd3,#2f678f_60%)]" />
        </div>
    </div>
);

const App = () => (
    <div className="relative flex h-screen cursor-default flex-col overflow-hidden bg-[#e6e6e6] font-['Open_Sans','Noto_Sans_CJK_SC',sans-serif] select-none">
        <TitleBar />
        <MenuTabs />
        <Ribbon />
        <FormulaBar />
        <Sheet />
        <SheetTabs />
        <StatusBar />
        <Taskbar />

        {/* cell cursor */}
        <Svg w={16} h={16} className="pointer-events-none absolute top-[487px] left-[436px]">
            <path d="M5.500 1.500h5v4h4v5h-4v4h-5v-4h-4v-5h4z" fill="#fff" stroke="#000" strokeWidth="1.500" />
        </Svg>

        {/* desktop gadget docked on the screen edge */}
        <div className="pointer-events-none absolute top-[132px] right-0 flex w-2.5 flex-col">
            <span className="h-[60px] w-[7px] rounded-full bg-[linear-gradient(#999,#a3a3a3_66%,#2fae5b_70%,#3bea5c_85%,#a5f5b0)]" />
            <span className="mt-1 flex h-[60px] items-end justify-center rounded-l-sm border border-[#555d66] bg-[#343a42] pb-1">
                <Svg w={4} h={10}><path d="M2 0v10" stroke="#8fb6c9" strokeWidth="4" strokeDasharray="1 1" /></Svg>
            </span>
        </div>
    </div>
);

export default App;
